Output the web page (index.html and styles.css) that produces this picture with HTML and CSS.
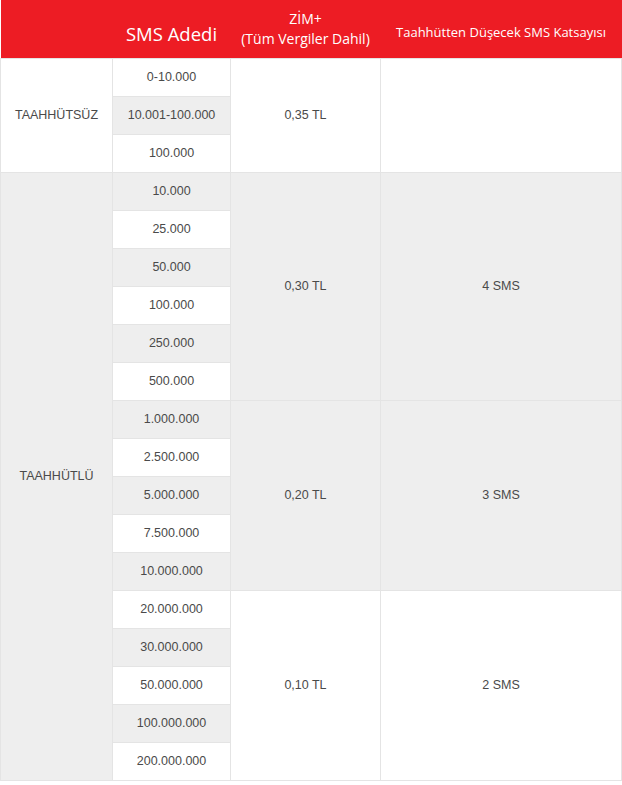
FILE: index.html
```html
<!DOCTYPE html>
<html lang="tr">
<head>
  <meta charset="UTF-8">
  <title>SMS Fiyatları</title>
  <link rel="stylesheet" href="styles.css">
</head>
<body>
  <table class="price-table">
    <colgroup>
      <col class="c1"><col class="c2"><col class="c3"><col class="c4">
    </colgroup>
    <thead>
      <tr>
        <th></th>
        <th class="big">SMS Adedi</th>
        <th class="mid">ZİM+<br>(Tüm Vergiler Dahil)</th>
        <th class="small">Taahhütten Düşecek SMS Katsayısı</th>
      </tr>
    </thead>
    <tbody>
      <tr class="odd"><td rowspan="3">TAAHHÜTSÜZ</td><td>0-10.000</td><td rowspan="3">0,35 TL</td><td rowspan="3"></td></tr>
      <tr class="even"><td>10.001-100.000</td></tr>
      <tr class="odd"><td>100.000</td></tr>

      <tr class="even"><td rowspan="16">TAAHHÜTLÜ</td><td>10.000</td><td rowspan="6">0,30 TL</td><td rowspan="6">4 SMS</td></tr>
      <tr class="odd"><td>25.000</td></tr>
      <tr class="even"><td>50.000</td></tr>
      <tr class="odd"><td>100.000</td></tr>
      <tr class="even"><td>250.000</td></tr>
      <tr class="odd"><td>500.000</td></tr>

      <tr class="even"><td>1.000.000</td><td rowspan="5">0,20 TL</td><td rowspan="5">3 SMS</td></tr>
      <tr class="odd"><td>2.500.000</td></tr>
      <tr class="even"><td>5.000.000</td></tr>
      <tr class="odd"><td>7.500.000</td></tr>
      <tr class="even"><td>10.000.000</td></tr>

      <tr class="odd"><td>20.000.000</td><td rowspan="5">0,10 TL</td><td rowspan="5">2 SMS</td></tr>
      <tr class="even"><td>30.000.000</td></tr>
      <tr class="odd"><td>50.000.000</td></tr>
      <tr class="even"><td>100.000.000</td></tr>
      <tr class="odd"><td>200.000.000</td></tr>
    </tbody>
  </table>
</body>
</html>
```

FILE: styles.css
```css
body {
  margin: 0;
  background: #fff;
}
.price-table {
  width: 621px;
  border-collapse: collapse;
  table-layout: fixed;
  font-family: "Liberation Sans", Arial, sans-serif;
  font-size: 12.5px;
  color: #4a4a4a;
}
.c1 { width: 112px; }
.c2 { width: 118px; }
.c3 { width: 150px; }
.c4 { width: 241px; }
.price-table thead tr {
  height: 58px;
}
.price-table th {
  padding: 0;
  background: #ed1c24;
  color: #fff;
  font-family: "Open Sans", "Noto Sans", sans-serif;
  font-weight: normal;
  vertical-align: middle;
  text-align: center;
  border: none;
}
.price-table th.big {
  font-size: 18.5px;
  line-height: 22px;
  padding-top: 10px;
}
.price-table th.mid {
  font-size: 14px;
  line-height: 20px;
}
.price-table th.small {
  font-size: 13px;
  padding-top: 6px;
}
.price-table tbody tr {
  height: 38px;
}
.price-table td {
  padding: 0;
  text-align: center;
  vertical-align: middle;
  border: 1px solid #e4e4e4;
}
.odd td {
  background: #fff;
}
.even td {
  background: #eee;
}
```
